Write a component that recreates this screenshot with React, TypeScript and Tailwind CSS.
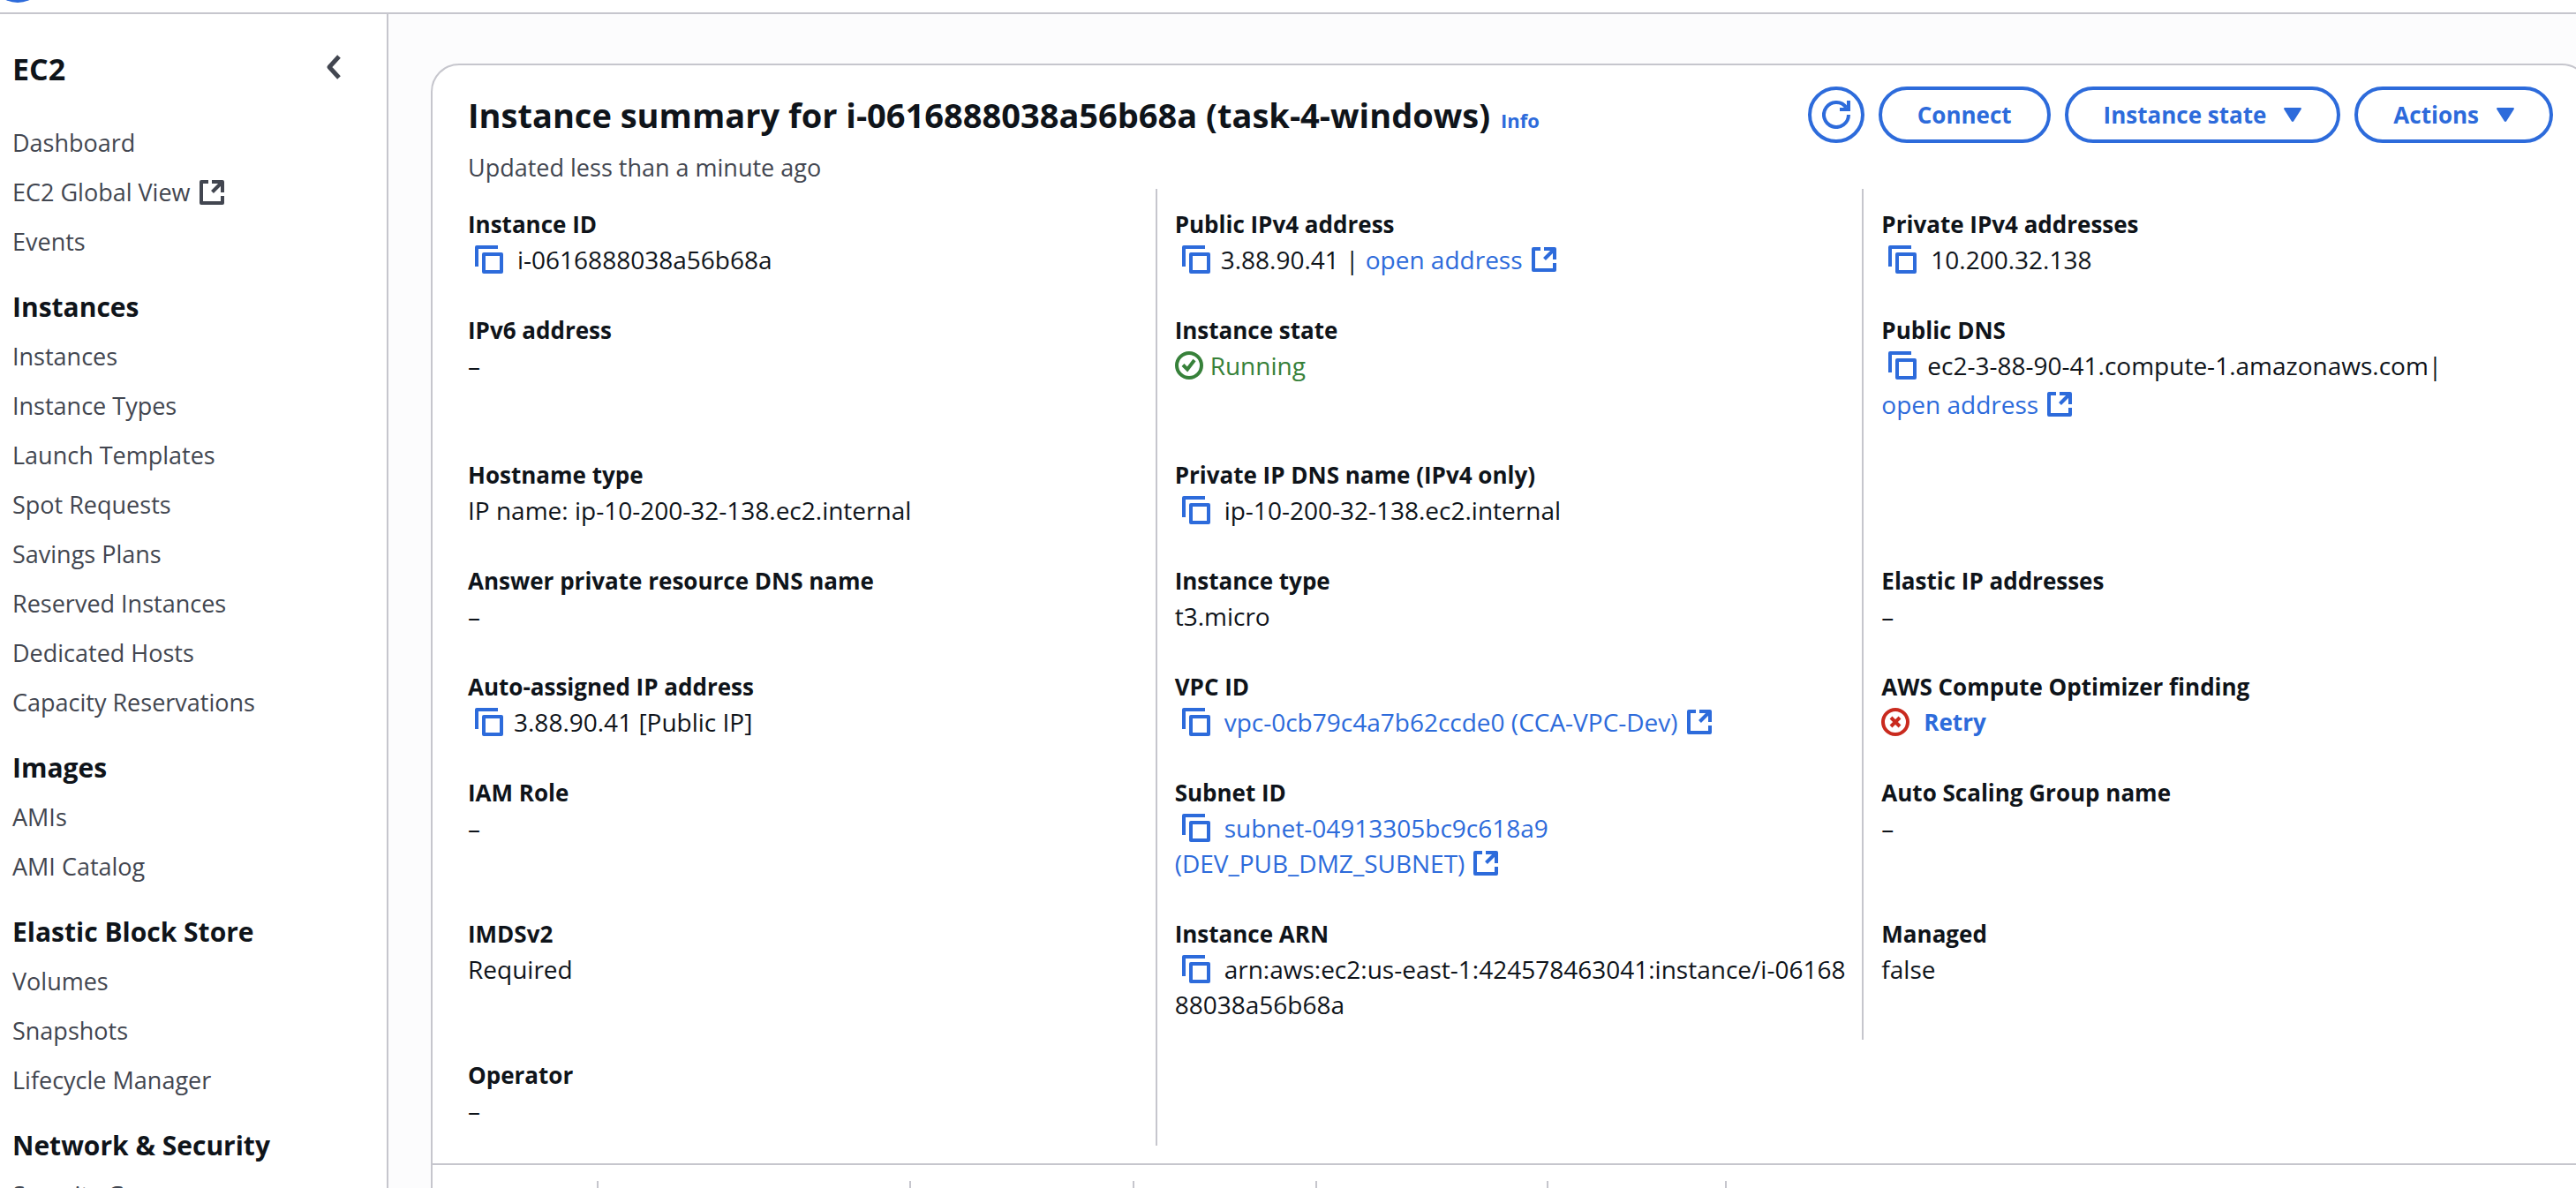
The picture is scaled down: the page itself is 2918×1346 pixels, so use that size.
import type { ReactNode } from 'react';

function ExternalIcon() {
  return (
    <span className="ml-2 inline-flex h-10 items-center align-top">
      <svg viewBox="-2 -2 32 32" className="size-8" fill="none" stroke="currentColor" strokeWidth="4" strokeLinejoin="round" aria-hidden="true">
        <path d="M10 2H2v24h24v-8M14 2h12v12" />
        <path d="M26 2 14.5 13.5" />
      </svg>
    </span>
  );
}

function CopyButton({ tight = false }: { tight?: boolean }) {
  return (
    <button
      type="button"
      aria-label="Copy"
      className={`ml-2 inline-flex h-10 items-center align-top text-[#2d6bdb] ${tight ? 'mr-3' : 'mr-4'}`}
    >
      <svg viewBox="0 0 32 32" className="size-8" fill="none" stroke="currentColor" strokeWidth="4" strokeLinejoin="round" aria-hidden="true">
        <path d="M26 2H2v22" />
        <path d="M10 10h20v20H10z" />
      </svg>
    </button>
  );
}

function Link({ children }: { children: ReactNode }) {
  return (
    <a href="#" className="text-[#2d6bdb]">
      {children}
      <ExternalIcon />
    </a>
  );
}

function Caret() {
  return (
    <svg viewBox="0 0 20 16" className="h-4 w-5" fill="currentColor" aria-hidden="true">
      <path d="M1.5 0h17c1.3 0 1.8 1 1.1 2l-8.4 13.3c-.6.9-1.8.9-2.4 0L.4 2C-.3 1 .2 0 1.5 0z" />
    </svg>
  );
}

function PillButton({ children }: { children: ReactNode }) {
  return (
    <button
      type="button"
      className="flex h-16 items-center gap-5 rounded-full border-4 border-[#2d6bdb] bg-white px-10 text-[26px] leading-10 font-bold whitespace-nowrap text-[#2d6bdb]"
    >
      {children}
    </button>
  );
}

const navSections: { title?: string; items: { label: string; external?: boolean }[] }[] = [
  { items: [{ label: 'Dashboard' }, { label: 'EC2 Global View', external: true }, { label: 'Events' }] },
  {
    title: 'Instances',
    items: [
      { label: 'Instances' },
      { label: 'Instance Types' },
      { label: 'Launch Templates' },
      { label: 'Spot Requests' },
      { label: 'Savings Plans' },
      { label: 'Reserved Instances' },
      { label: 'Dedicated Hosts' },
      { label: 'Capacity Reservations' },
    ],
  },
  { title: 'Images', items: [{ label: 'AMIs' }, { label: 'AMI Catalog' }] },
  { title: 'Elastic Block Store', items: [{ label: 'Volumes' }, { label: 'Snapshots' }, { label: 'Lifecycle Manager' }] },
  { title: 'Network & Security', items: [{ label: 'Security Groups' }] },
];

function Sidebar() {
  return (
    <aside className="w-[440px] shrink-0 overflow-hidden border-r-2 border-[#c6c6cd] bg-white pt-[38px] pl-3.5">
      <div className="mb-8 flex h-12 items-center justify-between pr-11">
        <h2 className="text-[34px] leading-[48px] font-bold">EC2</h2>
        <button type="button" aria-label="Close navigation" className="text-[#424650]">
          <svg viewBox="0 0 32 32" className="size-8" fill="none" stroke="currentColor" strokeWidth="5" strokeLinejoin="round" aria-hidden="true">
            <path d="M22 2 11 14l11 12" />
          </svg>
        </button>
      </div>
      <nav aria-label="EC2">
        {navSections.map((section) => (
          <section key={section.title ?? 'top'}>
            {section.title && (
              <h3 className="mt-[18px] text-[30px] leading-[56px] font-bold whitespace-nowrap">{section.title}</h3>
            )}
            <ul>
              {section.items.map((item) => (
                <li key={item.label} className="py-2">
                  <a href="#" className="block text-[27px] leading-10 font-medium whitespace-nowrap text-[#424650]">
                    {item.label}
                    {item.external && <ExternalIcon />}
                  </a>
                </li>
              ))}
            </ul>
          </section>
        ))}
      </nav>
    </aside>
  );
}

function Field({ label, children, divider = true }: { label?: string; children?: ReactNode; divider?: boolean }) {
  return (
    <div className={`py-5 pr-2 pl-5 ${divider ? 'border-r-2 border-[#c6c6cd]' : ''}`}>
      {label && (
        <>
          <dt className="text-[26px] leading-10 font-bold">{label}</dt>
          <dd className="text-[28px] leading-10 font-medium break-all">{children}</dd>
        </>
      )}
    </div>
  );
}

const tabWidths = ['w-[188px]', 'w-[354px]', 'w-[253px]', 'w-[207px]', 'w-[262px]', 'w-[202px]'];

export default function App() {
  return (
    <div className="flex h-screen flex-col overflow-hidden bg-white font-['Open_Sans','Noto_Sans',sans-serif] text-[#0f141a]">
      <header className="relative h-4 shrink-0 overflow-hidden border-b-2 border-[#c6c6cd]">
        <button type="button" aria-label="Menu" className="absolute bottom-[11px] left-[-12px] size-16 rounded-full bg-[#2d6bdb]" />
      </header>
      <div className="flex min-h-0 flex-1">
        <Sidebar />
        <main className="min-w-0 flex-1 overflow-hidden bg-[#fcfcfd] pt-14 pl-12">
          <div className="-mr-4 rounded-[32px] border-2 border-[#c6c6cd] bg-white pb-10">
            <div className="px-10 pt-6">
              <div className="flex items-start justify-between">
                <div className="pt-2">
                  <div className="flex items-baseline gap-3">
                    <h1 className="text-[38px] leading-[48px] font-bold whitespace-nowrap">
                      Instance summary for i-0616888038a56b68a (task-4-windows)
                    </h1>
                    <a href="#" className="text-[22px] font-bold text-[#2d6bdb]">
                      Info
                    </a>
                  </div>
                  <p className="mt-4 text-[27px] leading-10 font-medium text-[#424650]">Updated less than a minute ago</p>
                </div>
                <div className="flex gap-4">
                  <button
                    type="button"
                    aria-label="Refresh"
                    className="flex size-16 items-center justify-center rounded-full border-4 border-[#2d6bdb] text-[#2d6bdb]"
                  >
                    <svg viewBox="0 0 32 32" className="size-8" fill="none" stroke="currentColor" strokeWidth="4" aria-hidden="true">
                      <path d="M30 16A14 14 0 1 1 27.5 8" />
                      <path d="M30 0v10H20" />
                    </svg>
                  </button>
                  <PillButton>Connect</PillButton>
                  <PillButton>
                    Instance state
                    <Caret />
                  </PillButton>
                  <PillButton>
                    Actions
                    <Caret />
                  </PillButton>
                </div>
              </div>
              <dl className="-mx-5 mt-1 grid grid-cols-3">
                <Field label="Instance ID">
                  <CopyButton />
                  i-0616888038a56b68a
                </Field>
                <Field label="Public IPv4 address">
                  <CopyButton tight />
                  3.88.90.41 | <Link>open address</Link>
                </Field>
                <Field label="Private IPv4 addresses" divider={false}>
                  <CopyButton />
                  10.200.32.138
                </Field>

                <Field label="IPv6 address">–</Field>
                <Field label="Instance state">
                  <span className="flex items-center gap-2 text-[#37813a]">
                    <svg viewBox="0 0 32 32" className="size-8" fill="none" stroke="currentColor" strokeWidth="4" aria-hidden="true">
                      <circle cx="16" cy="16" r="14" />
                      <path d="m9 15.5 5 5L22 10" />
                    </svg>
                    Running
                  </span>
                </Field>
                <Field label="Public DNS" divider={false}>
                  <CopyButton tight />
                  ec2-3-88-90-41.compute-1.amazonaws.com|
                  <div className="mt-1">
                    <Link>open address</Link>
                  </div>
                </Field>

                <Field label="Hostname type">IP name: ip-10-200-32-138.ec2.internal</Field>
                <Field label="Private IP DNS name (IPv4 only)">
                  <CopyButton />
                  ip-10-200-32-138.ec2.internal
                </Field>
                <Field divider={false} />

                <Field label="Answer private resource DNS name">–</Field>
                <Field label="Instance type">t3.micro</Field>
                <Field label="Elastic IP addresses" divider={false}>
                  –
                </Field>

                <Field label="Auto-assigned IP address">
                  <CopyButton tight />
                  3.88.90.41 [Public IP]
                </Field>
                <Field label="VPC ID">
                  <CopyButton />
                  <Link>vpc-0cb79c4a7b62ccde0 (CCA-VPC-Dev)</Link>
                </Field>
                <Field label="AWS Compute Optimizer finding" divider={false}>
                  <span className="flex items-center gap-4">
                    <svg viewBox="0 0 32 32" className="size-8 text-[#c92a1e]" fill="none" stroke="currentColor" strokeWidth="4" aria-hidden="true">
                      <circle cx="16" cy="16" r="14" />
                      <path d="m11 11 10 10M21 11 11 21" />
                    </svg>
                    <button type="button" className="text-[26px] font-bold text-[#2d6bdb]">
                      Retry
                    </button>
                  </span>
                </Field>

                <Field label="IAM Role">–</Field>
                <Field label="Subnet ID">
                  <CopyButton />
                  <Link>
                    subnet-04913305bc9c618a9
                    <br />
                    (DEV_PUB_DMZ_SUBNET)
                  </Link>
                </Field>
                <Field label="Auto Scaling Group name" divider={false}>
                  –
                </Field>

                <Field label="IMDSv2">Required</Field>
                <Field label="Instance ARN">
                  <CopyButton />
                  arn:aws:ec2:us-east-1:424578463041:instance/i-0616888038a56b68a
                </Field>
                <Field label="Managed" divider={false}>
                  false
                </Field>

                <Field label="Operator">–</Field>
              </dl>
            </div>
            <div className="mt-5 flex border-t-2 border-[#c6c6cd] pt-[18px]">
              {tabWidths.map((width) => (
                <div key={width} className={`h-12 border-r-2 border-[#c6c6cd] ${width}`} />
              ))}
            </div>
          </div>
        </main>
      </div>
    </div>
  );
}
